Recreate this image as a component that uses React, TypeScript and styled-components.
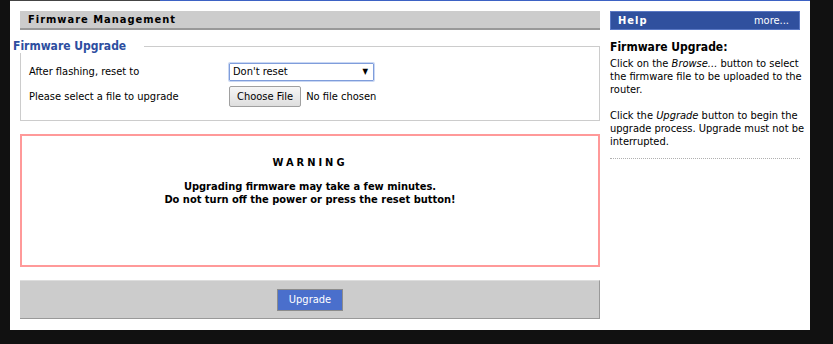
import React from "react";
import styled, { createGlobalStyle } from "styled-components";

const GlobalStyle = createGlobalStyle`
  html, body { margin: 0; padding: 0; background: #111111; }
  body {
    font-family: "DejaVu Sans", Tahoma, sans-serif;
    font-stretch: condensed;
    font-size: 11px;
    color: #000;
  }
`;

const Page = styled.div`
  width: 800px;
  margin-left: 10px;
  height: 330px;
  background: #ffffff;
  display: flex;
  flex-direction: column;
`;

const TopRule = styled.div`
  display: flex;
  height: 1px;
`;

const RuleSeg = styled.div<{ $color: string; $w?: number }>`
  background: ${(p) => p.$color};
  ${(p) => (p.$w ? `width: ${p.$w}px;` : "flex: 1;")}
`;

const Main = styled.div`
  display: flex;
  gap: 10px;
  padding: 10px 10px 0 10px;
`;

const LeftCol = styled.div`
  width: 580px;
  display: flex;
  flex-direction: column;
`;

const RightCol = styled.div`
  width: 190px;
  display: flex;
  flex-direction: column;
`;

const SectionHeader = styled.div`
  height: 17px;
  background: #cccccc;
  border-bottom: 2px solid #999999;
  padding-left: 8px;
  font-weight: bold;
  font-size: 11px;
  letter-spacing: 1px;
  line-height: 18px;
`;

const Fieldset = styled.fieldset`
  margin: 9px 0 0 0;
  border: 1px solid #cccccc;
  padding: 6px 8px 11px 8px;
  min-width: 0;
`;

const Legend = styled.legend`
  margin-left: -16px;
  padding: 0 18px 0 0;
  background: #ffffff;
  color: #2d4ea0;
  font-weight: bold;
  font-size: 12px;
  line-height: 14px;
`;

const FormRow = styled.div`
  display: flex;
  align-items: center;
  height: 25px;
`;

const Label = styled.div`
  width: 200px;
`;

const Select = styled.div`
  height: 16px;
  width: 135px;
  border: 1px solid #7f9ddb;
  box-shadow: 0 0 0 1px #c9d7f3;
  border-radius: 1px;
  display: flex;
  align-items: center;
  justify-content: space-between;
  padding: 0 5px 0 3px;
`;

const Caret = styled.span`
  font-size: 8px;
`;

const FileButton = styled.button`
  font: inherit;
  height: 21px;
  padding: 0 7px;
  background: linear-gradient(#f6f6f6, #dedede);
  border: 1px solid #a0a0a0;
  border-radius: 2px;
  color: #000;
`;

const FileNote = styled.span`
  margin-left: 5px;
`;

const Warning = styled.div`
  margin-top: 13px;
  height: 109px;
  border: 2px solid #ff9999;
  display: flex;
  flex-direction: column;
  align-items: center;
  padding-top: 20px;
  font-weight: bold;
`;

const WarnTitle = styled.div`
  letter-spacing: 3px;
  margin-bottom: 11px;
`;

const WarnLine = styled.div`
  line-height: 13px;
`;

const ButtonBar = styled.div`
  margin-top: 13px;
  height: 37px;
  background: #cccccc;
  border-top: 1px solid #dddddd;
  border-bottom: 1px solid #999999;
  border-right: 1px solid #999999;
  display: flex;
  align-items: center;
  justify-content: center;
`;

const PrimaryButton = styled.button`
  font: inherit;
  width: 66px;
  height: 22px;
  background: #4a6fcc;
  color: #ffffff;
  border: 1px solid #8c8c8c;
  padding: 0;
  margin-left: 1px;
`;

const HelpBar = styled.div`
  height: 17px;
  background: #30509e;
  border: 1px solid #5a78c4;
  color: #ffffff;
  display: flex;
  justify-content: space-between;
  align-items: center;
  padding: 0 10px 0 7px;
`;

const HelpTitle = styled.span`
  font-weight: bold;
  letter-spacing: 1px;
`;

const HelpMore = styled.span``;

const HelpBody = styled.div`
  padding: 11px 0 10px 0;
  border-bottom: 1px dotted #b0b0b0;
  line-height: 13px;
`;

const HelpHeading = styled.div`
  font-weight: bold;
  font-size: 12px;
  margin-bottom: 3px;
`;

const HelpPara = styled.p`
  margin: 0 -6px 13px 0;
  &:last-child { margin-bottom: 0; }
`;

export default function App() {
  return (
    <>
      <GlobalStyle />
      <Page>
        <TopRule>
          <RuleSeg $color="#444444" $w={150} />
          <RuleSeg $color="#3d62c4" />
        </TopRule>
        <Main>
          <LeftCol>
            <SectionHeader>Firmware Management</SectionHeader>
            <Fieldset>
              <Legend>Firmware Upgrade</Legend>
              <FormRow>
                <Label>After flashing, reset to</Label>
                <Select>
                  <span>Don't reset</span>
                  <Caret>▼</Caret>
                </Select>
              </FormRow>
              <FormRow>
                <Label>Please select a file to upgrade</Label>
                <FileButton>Choose File</FileButton>
                <FileNote>No file chosen</FileNote>
              </FormRow>
            </Fieldset>
            <Warning>
              <WarnTitle>WARNING</WarnTitle>
              <WarnLine>Upgrading firmware may take a few minutes.</WarnLine>
              <WarnLine>Do not turn off the power or press the reset button!</WarnLine>
            </Warning>
            <ButtonBar>
              <PrimaryButton>Upgrade</PrimaryButton>
            </ButtonBar>
          </LeftCol>
          <RightCol>
            <HelpBar>
              <HelpTitle>Help</HelpTitle>
              <HelpMore>more...</HelpMore>
            </HelpBar>
            <HelpBody>
              <HelpHeading>Firmware Upgrade:</HelpHeading>
              <HelpPara>
                Click on the <i>Browse...</i> button to select the firmware file to be uploaded to the router.
              </HelpPara>
              <HelpPara>
                Click the <i>Upgrade</i> button to begin the upgrade process. Upgrade must not be interrupted.
              </HelpPara>
            </HelpBody>
          </RightCol>
        </Main>
      </Page>
    </>
  );
}
